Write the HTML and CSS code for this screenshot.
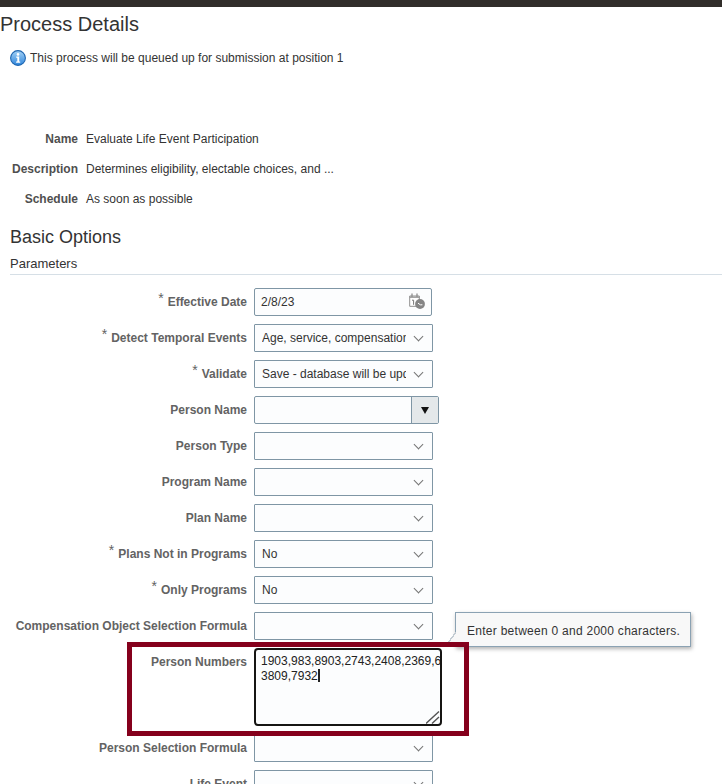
FILE: index.html
```html
<!DOCTYPE html>
<html lang="en">
<head>
  <meta charset="UTF-8">
  <meta name="viewport" content="width=device-width, initial-scale=1.0">
  <title>Process Details</title>
  <link rel="stylesheet" href="styles.css">
</head>
<body>
  <div class="topbar"></div>
  <h1>Process Details</h1>

  <div class="info">
    <svg class="info-icon" width="16" height="16" viewBox="0 0 16 16">
      <defs>
        <linearGradient id="infoFill" x1="0" y1="0" x2="0" y2="1">
          <stop offset="0" stop-color="#a5d2f5"/>
          <stop offset="1" stop-color="#2f86dc"/>
        </linearGradient>
      </defs>
      <circle cx="8" cy="8" r="7.4" fill="url(#infoFill)" stroke="#1f66b0" stroke-width="1.1"/>
      <circle cx="8" cy="4.4" r="1.3" fill="#fff"/>
      <path d="M6.2 6.6h3v5h1v1.2H6.1v-1.2h1.2V7.8H6.2z" fill="#fff"/>
    </svg>
    <span>This process will be queued up for submission at position 1</span>
  </div>

  <div class="details">
    <div class="detail"><span class="detail-label">Name</span><span>Evaluate Life Event Participation</span></div>
    <div class="detail"><span class="detail-label">Description</span><span>Determines eligibility, electable choices, and ...</span></div>
    <div class="detail"><span class="detail-label">Schedule</span><span>As soon as possible</span></div>
  </div>

  <h2>Basic Options</h2>
  <h3>Parameters</h3>

  <div class="form">
    <div class="row">
      <label><i>*</i>Effective Date</label>
      <div class="field date">
        <span class="value">2/8/23</span>
        <svg class="cal" width="18" height="18" viewBox="0 0 18 18">
          <path d="M.7 3h9.6v10.3H.7z" fill="#fff" stroke="#8f8f8f" stroke-width="1"/>
          <path d="M.7 4.2h9.6" stroke="#8f8f8f" stroke-width="1.2"/>
          <path d="M3 .5v3.4M8 .5v3.4" stroke="#8f8f8f" stroke-width="1.3"/>
          <path d="M3 7.2h1.6v4.6" fill="none" stroke="#777" stroke-width="1"/>
          <circle cx="11" cy="11" r="4.9" fill="#858585"/>
          <path d="M9 10.2l2.4 1.6h2" fill="none" stroke="#fff" stroke-width="1"/>
        </svg>
      </div>
    </div>
    <div class="row">
      <label><i>*</i>Detect Temporal Events</label>
      <div class="field select"><span class="value">Age, service, compensation, and other events</span><b class="chev"></b></div>
    </div>
    <div class="row">
      <label><i>*</i>Validate</label>
      <div class="field select"><span class="value">Save - database will be updated</span><b class="chev"></b></div>
    </div>
    <div class="row">
      <label>Person Name</label>
      <div class="field combo"><span class="value"></span><div class="combo-btn"></div></div>
    </div>
    <div class="row">
      <label>Person Type</label>
      <div class="field select"><span class="value"></span><b class="chev"></b></div>
    </div>
    <div class="row">
      <label>Program Name</label>
      <div class="field select"><span class="value"></span><b class="chev"></b></div>
    </div>
    <div class="row">
      <label>Plan Name</label>
      <div class="field select"><span class="value"></span><b class="chev"></b></div>
    </div>
    <div class="row">
      <label><i>*</i>Plans Not in Programs</label>
      <div class="field select"><span class="value">No</span><b class="chev"></b></div>
    </div>
    <div class="row">
      <label><i>*</i>Only Programs</label>
      <div class="field select"><span class="value">No</span><b class="chev"></b></div>
    </div>
    <div class="row">
      <label>Compensation Object Selection Formula</label>
      <div class="field select"><span class="value"></span><b class="chev"></b></div>
    </div>
    <div class="row row-area">
      <label>Person Numbers</label>
      <div class="area">
        <div class="area-text">1903,983,8903,2743,2408,2369,6<br>3809,7932<span class="caret"></span></div>
        <svg class="grip" width="14" height="14" viewBox="0 0 14 14">
          <path d="M0 13.5L13 1.5M6 13.5l7-6.5" stroke="#555" stroke-width="1.4" fill="none"/>
        </svg>
      </div>
    </div>
    <div class="row">
      <label>Person Selection Formula</label>
      <div class="field select"><span class="value"></span><b class="chev"></b></div>
    </div>
    <div class="row">
      <label>Life Event</label>
      <div class="field select"><span class="value"></span><b class="chev"></b></div>
    </div>
  </div>

  <div class="tooltip">Enter between 0 and 2000 characters.</div>
  <div class="callout"></div>
</body>
</html>
```

FILE: styles.css
```css
html, body {
  height: 784px;
  overflow: hidden;
}
body {
  margin: 0;
  position: relative;
  background: #fff;
  font-family: "Liberation Sans", Arial, sans-serif;
  font-size: 12px;
  color: #333;
}
.topbar {
  height: 7px;
  background: #312d2a;
}
h1 {
  margin: 5px 0 0;
  font-size: 20px;
  font-weight: normal;
  line-height: 24px;
  color: #333;
}
.info {
  display: flex;
  align-items: center;
  gap: 4px;
  margin: 14px 0 0 10px;
  height: 16px;
}
.details {
  margin-top: 65px;
}
.detail {
  display: flex;
  gap: 8px;
  height: 30px;
  line-height: 16px;
}
.detail-label {
  width: 78px;
  text-align: right;
  font-weight: bold;
  color: #4f4f4f;
}
h2 {
  margin: 4px 0 0 10px;
  font-size: 18px;
  font-weight: normal;
  line-height: 24px;
}
h3 {
  margin: 7px 0 0 10px;
  padding-bottom: 2px;
  font-size: 13px;
  font-weight: normal;
  line-height: 16px;
  border-bottom: 1px solid #d6dfe6;
}
.form {
  margin-top: 13px;
  display: flex;
  flex-direction: column;
  gap: 8px;
}
.row {
  display: flex;
  align-items: center;
  gap: 7px;
}
.row label {
  width: 247px;
  line-height: 16px;
  text-align: right;
  font-weight: bold;
  color: #636363;
  flex-shrink: 0;
}
.row label i {
  font-style: normal;
  font-weight: normal;
  font-size: 14px;
  line-height: 0;
  margin-right: 4px;
  position: relative;
  top: -3px;
}
.field {
  display: flex;
  align-items: center;
  box-sizing: border-box;
  width: 179px;
  height: 28px;
  background: #fcfdfe;
  border: 1px solid #7f96a5;
  border-radius: 1px;
  flex-shrink: 0;
}
.value {
  display: block;
  margin-left: 6px;
  flex: 1;
  min-width: 0;
  white-space: nowrap;
  overflow: hidden;
}
.select .value {
  flex: none;
  margin-left: 7px;
  width: 144px;
}
.chev {
  display: block;
  width: 6px;
  height: 6px;
  margin: -3px 0 0 9px;
  border-right: 1px solid #757575;
  border-bottom: 1px solid #757575;
  transform: rotate(45deg);
}
.date {
  width: 178px;
  border-radius: 2px;
}
.cal {
  margin-right: 4px;
}
.combo {
  width: 185px;
  border-radius: 2px;
}
.combo-btn {
  width: 26px;
  height: 26px;
  background: #e4e8ea;
  border-left: 1px solid #7f96a5;
  position: relative;
}
.combo-btn::after {
  content: "";
  position: absolute;
  left: 9px;
  top: 10px;
  border-top: 7px solid #111;
  border-left: 4.5px solid transparent;
  border-right: 4.5px solid transparent;
}
.row-area {
  align-items: flex-start;
}
.row-area label {
  padding-top: 6px;
}
.area {
  box-sizing: border-box;
  width: 188px;
  height: 78px;
  position: relative;
  background: #fcfdfe;
  border: 2px solid #161513;
  border-radius: 4px;
  padding: 4px 5px;
  overflow: hidden;
}
.area-text {
  line-height: 15px;
  white-space: nowrap;
  color: #222;
}
.caret {
  display: inline-block;
  width: 2px;
  height: 13px;
  background: #222;
  vertical-align: -2px;
}
.grip {
  position: absolute;
  right: 0;
  bottom: 0;
}
.tooltip {
  position: absolute;
  left: 455px;
  top: 612px;
  box-sizing: border-box;
  width: 236px;
  height: 35px;
  padding: 10px 11px;
  line-height: 16px;
  letter-spacing: 0.27px;
  color: #333;
  background: #f8f8f8;
  border: 1px solid #8ba2b3;
  box-shadow: 1px 2px 4px rgba(0, 0, 0, 0.3);
  white-space: nowrap;
}
.tooltip::before {
  content: "";
  position: absolute;
  left: -9px;
  top: 19px;
  width: 9px;
  height: 12px;
  background: linear-gradient(to bottom right, transparent 46%, #c3ccd3 46%, #c3ccd3 56%, #f8f8f8 56%);
}
.callout {
  position: absolute;
  left: 127px;
  top: 642px;
  box-sizing: border-box;
  width: 342px;
  height: 94px;
  border: 5px solid #85001c;
}
```
